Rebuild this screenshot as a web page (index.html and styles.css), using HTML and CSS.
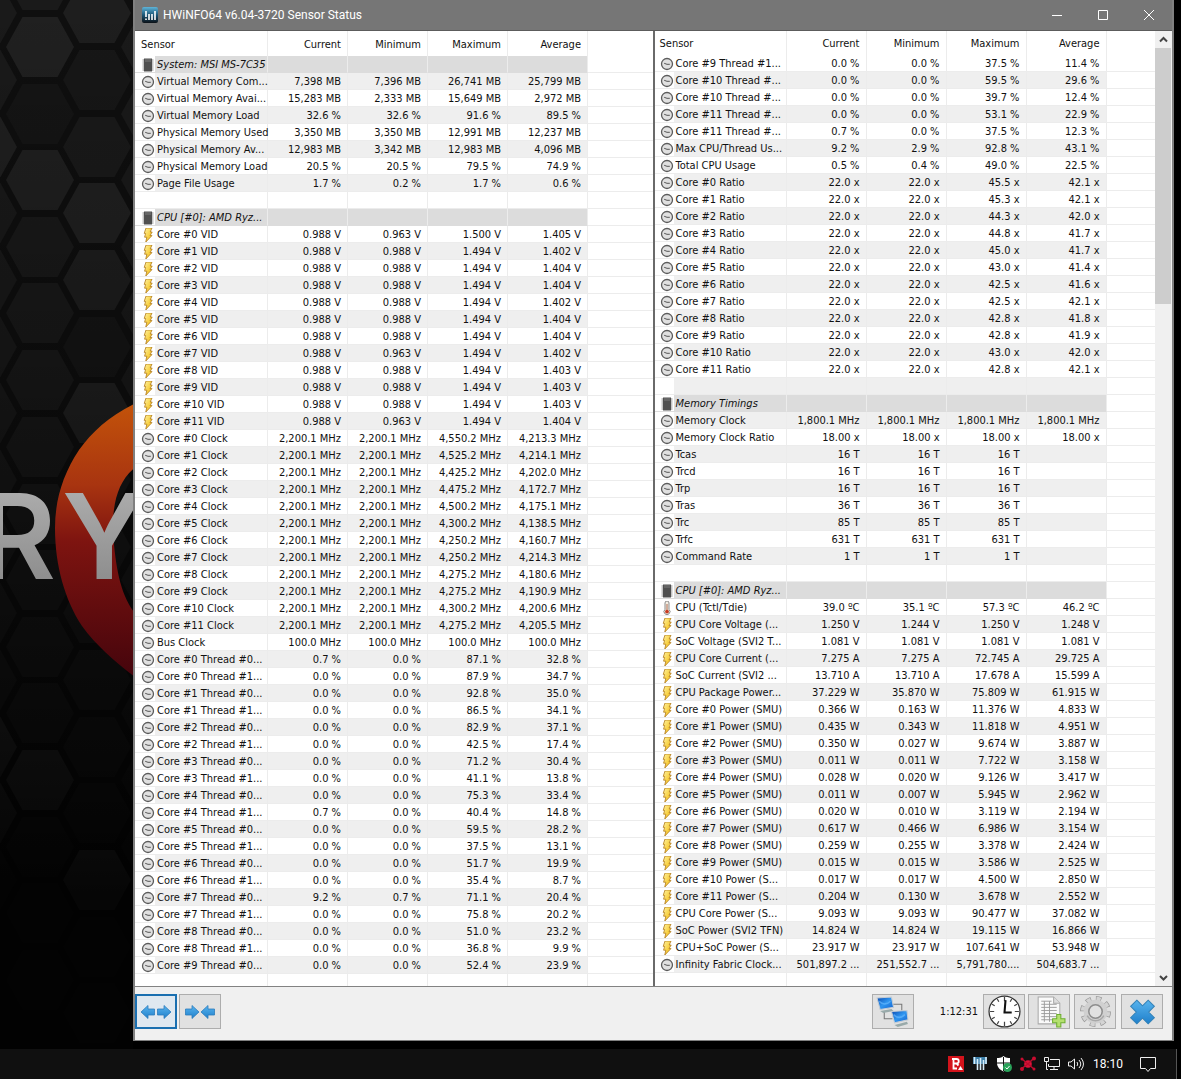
FILE: index.html
```html
<!DOCTYPE html>
<html lang="en">
<head>
<meta charset="utf-8">
<title>HWiNFO64 v6.04-3720 Sensor Status</title>
<link rel="stylesheet" href="styles.css">
</head>
<body>
<svg class="sprites" aria-hidden="true">
  <defs>
    <linearGradient id="bolt-fill" x1="0" y1="0" x2="1" y2="1"><stop offset="0" stop-color="#fff3a0"/><stop offset="1" stop-color="#f2b600"/></linearGradient>
    <linearGradient id="arrow-fill" x1="0" y1="0" x2="0" y2="1"><stop offset="0" stop-color="#58b4ee"/><stop offset="1" stop-color="#1f7fcb"/></linearGradient>
    <linearGradient id="screen-fill" x1="0" y1="0" x2="1" y2="1"><stop offset="0" stop-color="#0a49b0"/><stop offset="0.5" stop-color="#2f96f0"/><stop offset="1" stop-color="#1462cf"/></linearGradient>
    <linearGradient id="app-fill" x1="0" y1="0" x2="0" y2="1"><stop offset="0" stop-color="#5fb4d8"/><stop offset="0.5" stop-color="#1d5676"/><stop offset="1" stop-color="#0a1016"/></linearGradient>
  </defs>
  <symbol id="clock" viewBox="0 0 14 14"><circle cx="7" cy="7" r="5.5" fill="#e0e0e0" stroke="#5c5c5c" stroke-width="1.3"/><path d="M4.2 6.300 7 7.300h2.800" fill="none" stroke="#555"/></symbol>
  <symbol id="bolt" viewBox="0 0 14 14"><path d="M5 0h6L9.200 4h2L9 7.600h2L4.800 14l1-4.800H3.600l1-3.800H3.200z" fill="url(#bolt-fill)" stroke="#b07a1c" stroke-width=".8"/></symbol>
  <symbol id="chip" viewBox="0 0 14 14"><path d="M1.500 2h11M1.500 4h11M1.500 6h11M1.500 8h11M1.500 10h11M1.500 12h11" stroke="#888"/><path d="M3 .5h8v13H3z" fill="#505050"/><path d="M4 1h6v3H4z" fill="#666"/></symbol>
  <symbol id="thermo" viewBox="0 0 14 14"><path d="M5 2a2 2 0 0 1 4 0v6.400a3 3 0 1 1-4 0z" fill="#f4efe4" stroke="#8b8b8b"/><path d="M7 3v6" stroke="#b06a50"/><circle cx="7" cy="10.600" r="1.900" fill="#c83a20"/></symbol>
  <symbol id="app" viewBox="0 0 16 16"><rect width="16" height="16" rx="2" fill="url(#app-fill)"/><path d="M4 4v6M7 7v6M10 7v6M13 4v9M4 11.500V13" stroke="#fff" stroke-width="1.600"/></symbol>
  <symbol id="arrow-left" viewBox="0 0 16 16"><path d="M1 8 8 1.500V5h6.500v6H8v3.500z" fill="url(#arrow-fill)" stroke="#2c7cbc" stroke-width=".8"/></symbol>
  <symbol id="arrow-right" viewBox="0 0 16 16"><path d="M15 8 8 1.500V5H1.500v6H8v3.500z" fill="url(#arrow-fill)" stroke="#2c7cbc" stroke-width=".8"/></symbol>
</svg>

<main class="desktop">
  <svg class="wallpaper" aria-hidden="true">
    <defs>
      <linearGradient id="fade" x1="0" y1="0" x2="0" y2="1"><stop offset="0" stop-color="#000" stop-opacity="0"/><stop offset=".35" stop-color="#000" stop-opacity=".25"/><stop offset=".85" stop-color="#000" stop-opacity=".9"/></linearGradient>
      <linearGradient id="ring" x1="0" y1="0" x2="0" y2="1"><stop offset="0" stop-color="#c4540a"/><stop offset=".3" stop-color="#a83410"/><stop offset=".5" stop-color="#7e1410"/><stop offset="1" stop-color="#43040c"/></linearGradient>
      <linearGradient id="steel" x1="0" y1="0" x2="0" y2="1"><stop offset="0" stop-color="#b4b4b4"/><stop offset="1" stop-color="#858585"/></linearGradient>
      <path id="hex" d="M-17.500-30h35L34 0 17.500 30h-35L-34 0z"/>
    </defs>
    <rect width="100%" height="100%" fill="#0f0f0f"/>
    <g fill="#1a1a1a">
      <use href="#hex" x="40" y="-20"/><use href="#hex" x="40" y="47" fill="#202020"/><use href="#hex" x="40" y="114" fill="#151515"/><use href="#hex" x="40" y="180" fill="#202020"/><use href="#hex" x="40" y="247"/><use href="#hex" x="40" y="313"/><use href="#hex" x="40" y="380"/><use href="#hex" x="40" y="447"/><use href="#hex" x="40" y="514"/><use href="#hex" x="40" y="580"/><use href="#hex" x="40" y="647"/><use href="#hex" x="40" y="713"/><use href="#hex" x="40" y="780" fill="#2c2c2c"/><use href="#hex" x="40" y="847"/><use href="#hex" x="40" y="913"/><use href="#hex" x="40" y="980"/>
      <use href="#hex" x="97" y="13" fill="#1e1e1e"/><use href="#hex" x="97" y="80" fill="#171717"/><use href="#hex" x="97" y="147"/><use href="#hex" x="97" y="213" fill="#212121"/><use href="#hex" x="97" y="280" fill="#1f1f1f"/><use href="#hex" x="97" y="347" fill="#161616"/><use href="#hex" x="97" y="413" fill="#222"/><use href="#hex" x="97" y="480"/><use href="#hex" x="97" y="547"/><use href="#hex" x="97" y="613"/><use href="#hex" x="97" y="680"/><use href="#hex" x="97" y="747"/><use href="#hex" x="97" y="813"/><use href="#hex" x="97" y="880" fill="#3c3c3c"/><use href="#hex" x="97" y="947"/><use href="#hex" x="97" y="1013"/>
      <use href="#hex" x="-17" y="13"/><use href="#hex" x="-17" y="80"/><use href="#hex" x="-17" y="147" fill="#202020"/><use href="#hex" x="-17" y="213"/><use href="#hex" x="-17" y="280"/><use href="#hex" x="-17" y="347"/><use href="#hex" x="-17" y="413"/><use href="#hex" x="-17" y="480"/><use href="#hex" x="-17" y="547"/><use href="#hex" x="-17" y="613"/><use href="#hex" x="-17" y="680"/><use href="#hex" x="-17" y="747" fill="#2a2a2a"/><use href="#hex" x="-17" y="813" fill="#2a2a2a"/><use href="#hex" x="-17" y="880"/>
      <use href="#hex" x="155" y="47"/><use href="#hex" x="155" y="114"/><use href="#hex" x="155" y="180"/><use href="#hex" x="155" y="247"/><use href="#hex" x="155" y="313"/><use href="#hex" x="155" y="380"/><use href="#hex" x="155" y="580"/><use href="#hex" x="155" y="713"/><use href="#hex" x="155" y="780"/><use href="#hex" x="155" y="847"/>
    </g>
    <rect width="100%" height="100%" fill="url(#fade)"/>
    <path d="M140 401C112 414 93 430 79 450 63 474 55 500 55 528c0 38 10 72 27 98 16 22 36 38 58 55v-62c-18-18-24-46-27-86-1-32 6-56 27-69z" fill="url(#ring)"/>
    <g class="wordmark" fill="url(#steel)"><text x="56" y="579" text-anchor="end">R</text><text x="62" y="579">Y</text></g>
  </svg>

  <section class="window">
    <header class="titlebar">
      <svg class="app-icon"><use href="#app"/></svg>
      <h1>HWiNFO64 v6.04-3720 Sensor Status</h1>
      <button aria-label="Minimize"><svg viewBox="0 0 12 12"><path d="M1 6.500h10"/></svg></button>
      <button aria-label="Maximize"><svg viewBox="0 0 12 12"><path d="M1.500 1.500h9v9h-9z"/></svg></button>
      <button aria-label="Close"><svg viewBox="0 0 12 12"><path d="m1 1 10 10M11 1 1 11"/></svg></button>
    </header>

    <div class="panels">
      <div class="panel">
        <table class="sensors" id="left"></table>
      </div>
      <div class="panel panel-right">
        <table class="sensors" id="right"></table>
        <div class="scrollbar">
          <button aria-label="Scroll up"><svg viewBox="0 0 9 9"><path d="m1 6.500 3.500-3.500L8 6.500"/></svg></button>
          <div class="thumb"></div>
          <div class="track"></div>
          <button aria-label="Scroll down"><svg viewBox="0 0 9 9"><path d="M1 3l3.500 3.500L8 3"/></svg></button>
        </div>
      </div>
    </div>

    <footer class="toolbar">
      <button class="tool focused" aria-label="Expand columns"><svg class="arrow"><use href="#arrow-left"/></svg><svg class="arrow"><use href="#arrow-right"/></svg></button>
      <button class="tool" aria-label="Shrink columns"><svg class="arrow"><use href="#arrow-right"/></svg><svg class="arrow"><use href="#arrow-left"/></svg></button>
      <button class="tool network" aria-label="Remote monitoring">
        <svg class="glyph" viewBox="0 0 32 32"><path d="M16 9h9v6M8 16v7h8" fill="none" stroke="#777"/><path d="m1 3 14-1 2 10-13 2z" fill="url(#screen-fill)" stroke="#c4ccd4"/><path d="m4 15.500 11-2 2 2-10 2z" fill="#9aa"/><path d="m15 16 15-1 1 9-13 3z" fill="url(#screen-fill)" stroke="#c4ccd4"/><path d="m18 29 12-3 1 2-10 3z" fill="#9aa"/><path d="M3 6c4 4 8 3 11 0M17 19c4 4 8 3 11 0" fill="none" stroke="#6cbcff" stroke-opacity=".6" stroke-width="1.500"/></svg>
      </button>
      <time class="elapsed">1:12:31</time>
      <button class="tool" aria-label="Reset clock">
        <svg class="glyph" viewBox="0 0 32 32"><circle cx="16" cy="16" r="15" fill="#fff" stroke="#333" stroke-width="1.200"/><path d="M16 2v4M16 26v4M2 16h4M26 16h4M9 3.900l1.500 2.600M23 3.900l-1.500 2.600M3.900 9l2.600 1.500M28.100 9l-2.600 1.500M3.900 23l2.600-1.500M28.100 23l-2.600-1.500M9 28.100l1.500-2.600M23 28.100l-1.500-2.600" stroke="#444" stroke-width="1.200"/><path d="M17 5 16 17M15 17h8" fill="none" stroke="#111" stroke-width="2"/></svg>
      </button>
      <button class="tool log" aria-label="Start logging">
        <svg class="glyph" viewBox="0 0 32 32"><path d="M5 2h15l6 6v20H5z" fill="#fafafa" stroke="#aaa"/><path d="M20 2v6h6" fill="#ddd" stroke="#aaa"/><path d="M8 9h15M8 12h15M8 15h15M8 18h15M8 21h15M8 24h15M8 6h10M11 6v20M16 6v20" stroke="#999" stroke-width=".9"/><path d="M23 19h4v4h4v4h-4v4h-4v-4h-4v-4h4z" fill="#b4e070" stroke="#6eae30"/></svg>
      </button>
      <button class="tool settings" aria-label="Settings">
        <svg class="glyph" viewBox="0 0 32 32"><circle cx="16" cy="16" r="12.500" fill="none" stroke="#999" stroke-width="5" stroke-dasharray="5.200 4.617"/><circle cx="16" cy="16" r="12.500" fill="none" stroke="#d4d4d4" stroke-width="3.500" stroke-dasharray="4 5.817" stroke-dashoffset="-.6"/><circle cx="16" cy="16" r="9" fill="none" stroke="#d0d0d0" stroke-width="5"/><circle cx="16" cy="16" r="6.500" fill="none" stroke="#8d8d8d" stroke-width="1.500"/><path d="M8 20a9 9 0 0 0 16 0" fill="none" stroke="#a8a8a8" stroke-width="1.500"/></svg>
      </button>
      <button class="tool exit" aria-label="Close sensors">
        <svg class="glyph" viewBox="0 0 32 32"><path d="m10.500 5 5.500 5.500L21.500 5l6 6-5.500 5.500 5.500 5.500-6 6-5.500-5.500-5.500 5.500-6-6 5.500-5.500L4.500 11z" fill="url(#arrow-fill)" stroke="#3583b8"/></svg>
      </button>
    </footer>
  </section>
</main>

<footer class="taskbar">
  <button aria-label="Bitdefender"><svg viewBox="0 0 16 16"><path d="M0 0h16v16H0z" fill="#d3131b"/><path d="M4 3h4.500a2 2 0 0 1 0 4.500H5.500M5.500 3v9.500H9M8.500 7.500l2 2" fill="none" stroke="#fff" stroke-width="1.800"/><path d="m12.500 10 2.500 4h-5z" fill="#fff"/></svg></button>
  <button aria-label="HWiNFO"><svg viewBox="0 0 16 16"><path d="M1 1h14v7H1z" fill="#3d7fa8"/><path d="M2.500 1v7M5.500 3v11M8.500 2v12M11.500 4v10M14 1v7" stroke="#d8eefa" stroke-width="1.600"/></svg></button>
  <button aria-label="Security"><svg viewBox="0 0 16 16"><path d="M7.500 0C5 2 3 2 1 2v5c0 4 3 7 6.500 8.500C11 14 14 11 14 7V2c-2 0-4 0-6.500-2z" fill="#fff"/><path d="M7.500 1v14M1 7h13" stroke="#111"/><circle cx="11.500" cy="11.500" r="4.500" fill="#2aa35a"/><path d="m9.500 11.500 1.500 1.500 2.500-3" fill="none" stroke="#fff"/></svg></button>
  <button aria-label="Radeon"><svg viewBox="0 0 16 16"><circle cx="8" cy="8" r="3.800" fill="#e01038"/><path d="m8 8-6-5M8 8l6-6M8 8l-7 5M8 8l6 5" stroke="#b80c2c" stroke-width="1.500"/><circle cx="2" cy="3" r="1.500" fill="#c80c30"/><circle cx="14" cy="2.500" r="2" fill="#c80c30"/><circle cx="2" cy="13" r="2" fill="#c80c30"/><circle cx="14" cy="13" r="1.500" fill="#c80c30"/></svg></button>
  <button aria-label="Network"><svg viewBox="0 0 16 16"><path d="M6 3.500h9.500v7H4.500V8M10 10.500v3M6 13.500h8M.5 1.500h4v4h-4zM2.500 5.500v8H4" fill="none" stroke="#eee"/></svg></button>
  <button aria-label="Volume"><svg viewBox="0 0 16 16"><path d="M.5 6v4H3l3.500 3V3L3 6zM9 6q1.500 2 0 4M11 4q3.500 4 0 8M13 2q5 6 0 12" fill="none" stroke="#eee"/></svg></button>
  <time>18:10</time>
  <button class="notifications" aria-label="Notifications"><svg viewBox="0 0 16 16"><path d="M.5 1.500h15v11h-5L8 15.500l-2.500-3h-5z" fill="none" stroke="#eee"/></svg></button>
</footer>
<script src="script.js"></script>
</body>
</html>
```
FILE: styles.css
```css
* { box-sizing: border-box; }

body {
  margin: 0;
  min-height: 100vh;
  display: flex;
  flex-direction: column;
  background: #000;
  color: #111;
  font: 11px/14px "DejaVu Sans Condensed", "Noto Sans", sans-serif;
}

button {
  padding: 0;
  border: 0;
  background: none;
  font: inherit;
  display: flex;
  align-items: center;
  justify-content: center;
}

.sprites { position: absolute; width: 0; height: 0; }

/* Desktop */
.desktop {
  position: relative;
  flex: 1;
  display: flex;
  padding: 0 7px 8px 133px;
}
.wallpaper { position: absolute; left: 0; top: 0; width: 133px; height: 100%; }
.wordmark { font: 600 118px Inter, sans-serif; }

/* Window */
.window {
  position: relative;
  flex: 1;
  min-width: 0;
  display: flex;
  flex-direction: column;
  border: solid #808080;
  border-width: 0 2px 1px;
  background: #f0f0f0;
}
.titlebar {
  display: flex;
  align-items: center;
  height: 31px;
  padding-left: 7px;
  background: #767676;
  border-bottom: 1px solid #5c5c5c;
  color: #fff;
}
.app-icon { width: 16px; height: 16px; margin-right: 5px; }
.titlebar h1 { flex: 1; margin: 0; font: 12px/16px Roboto, sans-serif; }
.titlebar button { width: 46px; height: 30px; }
.titlebar button svg { width: 12px; height: 12px; fill: none; stroke: #fff; }

.panels {
  flex: 1;
  display: grid;
  grid-template-columns: 1fr 1fr;
  gap: 2px;
  background: #6a6a6a;
  border-bottom: 1px solid #828282;
}
.panel { display: flex; align-items: stretch; min-width: 0; background: #fff; }

/* Sensor tables */
.sensors {
  --inset: 20px;
  flex: 1;
  table-layout: fixed;
  width: 100%;
  height: 100%;
  border-collapse: separate;
  border-spacing: 0;
  white-space: nowrap;
}
.sensors th, .sensors td {
  padding: 2px 6px 0 0;
  border-right: 1px solid #ececec;
  text-align: right;
  font-weight: 400;
}
.sensors th { width: 80px; height: 25px; }
.sensors td { height: 17px; border-bottom: 1px solid #ececec; }
.sensors .name { width: 133px; padding-left: 6px; padding-right: 0; text-align: left; }
.sensors .rest { width: auto; border-right: 0; }
.sensors tbody tr:nth-child(even) td { background: #efefef; }
.sensors tbody tr.group td { background: #dcdcdc; border-bottom-color: #dcdcdc; }
.sensors tbody tr:nth-child(even) .name { background: linear-gradient(to right, #fff var(--inset), #efefef var(--inset)); }
.sensors tbody tr.group .name { background: linear-gradient(to right, #fff var(--inset), #dcdcdc var(--inset)); }
.sensors tbody tr .rest.rest { background: #fff; border-bottom-color: #ececec; }
.sensors .group .label { font-style: italic; }
.sensors .tail td { height: auto; padding: 0; border-bottom: 0; }
.cell { display: flex; align-items: center; gap: 2px; height: 14px; }
.cell svg { flex: none; width: 14px; height: 14px; }

.panel-right .sensors { --inset: 19px; }
.panel-right .sensors th { height: 24px; }
.panel-right .sensors .name { width: 132px; padding-left: 5px; }

.scrollbar { display: flex; flex-direction: column; width: 17px; padding-right: 1px; background: #f0f0f0; }
.scrollbar button { height: 17px; }
.scrollbar svg { width: 9px; height: 9px; fill: none; stroke: #444; stroke-width: 2; }
.thumb { flex: 5; background: #cdcdcd; }
.track { flex: 13; }

/* Toolbar */
.toolbar { display: flex; align-items: center; gap: 2px; height: 53px; padding: 0 9px 4px 0; }
.tool { width: 42px; height: 35px; background: #e1e1e1; border: 1px solid #adadad; }
.focused { border: 2px solid #1a6fb0; background: #dfe8f0; }
.arrow { width: 16px; height: 16px; }
.glyph { width: 33px; height: 33px; }
.network { margin-left: auto; }
.elapsed { margin: 0 3px 0 24px; }
.log { margin-left: 1px; }
.settings { margin-left: 2px; }
.exit { margin-left: 3px; }

/* Taskbar */
.taskbar {
  display: flex;
  align-items: center;
  justify-content: flex-end;
  gap: 8px;
  height: 30px;
  margin-right: 4px;
  padding-right: 20px;
  background: #101010;
  border-right: 1px solid #555;
  color: #fff;
  font: 12px/16px Roboto, sans-serif;
}
.taskbar svg { width: 16px; height: 16px; }
.taskbar time { margin-left: 1px; }
.taskbar .notifications { margin-left: 9px; }
```
FILE: script.js
```js
// One line per table row: icon | label | current | minimum | maximum | average
const left = `chip|System: MSI MS-7C35
clock|Virtual Memory Com...|7,398 MB|7,396 MB|26,741 MB|25,799 MB
clock|Virtual Memory Avai...|15,283 MB|2,333 MB|15,649 MB|2,972 MB
clock|Virtual Memory Load|32.6 %|32.6 %|91.6 %|89.5 %
clock|Physical Memory Used|3,350 MB|3,350 MB|12,991 MB|12,237 MB
clock|Physical Memory Av...|12,983 MB|3,342 MB|12,983 MB|4,096 MB
clock|Physical Memory Load|20.5 %|20.5 %|79.5 %|74.9 %
clock|Page File Usage|1.7 %|0.2 %|1.7 %|0.6 %

chip|CPU [#0]: AMD Ryz...
bolt|Core #0 VID|0.988 V|0.963 V|1.500 V|1.405 V
bolt|Core #1 VID|0.988 V|0.988 V|1.494 V|1.402 V
bolt|Core #2 VID|0.988 V|0.988 V|1.494 V|1.404 V
bolt|Core #3 VID|0.988 V|0.988 V|1.494 V|1.404 V
bolt|Core #4 VID|0.988 V|0.988 V|1.494 V|1.402 V
bolt|Core #5 VID|0.988 V|0.988 V|1.494 V|1.404 V
bolt|Core #6 VID|0.988 V|0.988 V|1.494 V|1.404 V
bolt|Core #7 VID|0.988 V|0.963 V|1.494 V|1.402 V
bolt|Core #8 VID|0.988 V|0.988 V|1.494 V|1.403 V
bolt|Core #9 VID|0.988 V|0.988 V|1.494 V|1.403 V
bolt|Core #10 VID|0.988 V|0.988 V|1.494 V|1.403 V
bolt|Core #11 VID|0.988 V|0.963 V|1.494 V|1.404 V
clock|Core #0 Clock|2,200.1 MHz|2,200.1 MHz|4,550.2 MHz|4,213.3 MHz
clock|Core #1 Clock|2,200.1 MHz|2,200.1 MHz|4,525.2 MHz|4,214.1 MHz
clock|Core #2 Clock|2,200.1 MHz|2,200.1 MHz|4,425.2 MHz|4,202.0 MHz
clock|Core #3 Clock|2,200.1 MHz|2,200.1 MHz|4,475.2 MHz|4,172.7 MHz
clock|Core #4 Clock|2,200.1 MHz|2,200.1 MHz|4,500.2 MHz|4,175.1 MHz
clock|Core #5 Clock|2,200.1 MHz|2,200.1 MHz|4,300.2 MHz|4,138.5 MHz
clock|Core #6 Clock|2,200.1 MHz|2,200.1 MHz|4,250.2 MHz|4,160.7 MHz
clock|Core #7 Clock|2,200.1 MHz|2,200.1 MHz|4,250.2 MHz|4,214.3 MHz
clock|Core #8 Clock|2,200.1 MHz|2,200.1 MHz|4,275.2 MHz|4,180.6 MHz
clock|Core #9 Clock|2,200.1 MHz|2,200.1 MHz|4,275.2 MHz|4,190.9 MHz
clock|Core #10 Clock|2,200.1 MHz|2,200.1 MHz|4,300.2 MHz|4,200.6 MHz
clock|Core #11 Clock|2,200.1 MHz|2,200.1 MHz|4,275.2 MHz|4,205.5 MHz
clock|Bus Clock|100.0 MHz|100.0 MHz|100.0 MHz|100.0 MHz
clock|Core #0 Thread #0...|0.7 %|0.0 %|87.1 %|32.8 %
clock|Core #0 Thread #1...|0.0 %|0.0 %|87.9 %|34.7 %
clock|Core #1 Thread #0...|0.0 %|0.0 %|92.8 %|35.0 %
clock|Core #1 Thread #1...|0.0 %|0.0 %|86.5 %|34.1 %
clock|Core #2 Thread #0...|0.0 %|0.0 %|82.9 %|37.1 %
clock|Core #2 Thread #1...|0.0 %|0.0 %|42.5 %|17.4 %
clock|Core #3 Thread #0...|0.0 %|0.0 %|71.2 %|30.4 %
clock|Core #3 Thread #1...|0.0 %|0.0 %|41.1 %|13.8 %
clock|Core #4 Thread #0...|0.0 %|0.0 %|75.3 %|33.4 %
clock|Core #4 Thread #1...|0.7 %|0.0 %|40.4 %|14.8 %
clock|Core #5 Thread #0...|0.0 %|0.0 %|59.5 %|28.2 %
clock|Core #5 Thread #1...|0.0 %|0.0 %|37.5 %|13.1 %
clock|Core #6 Thread #0...|0.0 %|0.0 %|51.7 %|19.9 %
clock|Core #6 Thread #1...|0.0 %|0.0 %|35.4 %|8.7 %
clock|Core #7 Thread #0...|9.2 %|0.7 %|71.1 %|20.4 %
clock|Core #7 Thread #1...|0.0 %|0.0 %|75.8 %|20.2 %
clock|Core #8 Thread #0...|0.0 %|0.0 %|51.0 %|23.2 %
clock|Core #8 Thread #1...|0.0 %|0.0 %|36.8 %|9.9 %
clock|Core #9 Thread #0...|0.0 %|0.0 %|52.4 %|23.9 %`;

const right = `clock|Core #9 Thread #1...|0.0 %|0.0 %|37.5 %|11.4 %
clock|Core #10 Thread #...|0.0 %|0.0 %|59.5 %|29.6 %
clock|Core #10 Thread #...|0.0 %|0.0 %|39.7 %|12.4 %
clock|Core #11 Thread #...|0.0 %|0.0 %|53.1 %|22.9 %
clock|Core #11 Thread #...|0.7 %|0.0 %|37.5 %|12.3 %
clock|Max CPU/Thread Us...|9.2 %|2.9 %|92.8 %|43.1 %
clock|Total CPU Usage|0.5 %|0.4 %|49.0 %|22.5 %
clock|Core #0 Ratio|22.0 x|22.0 x|45.5 x|42.1 x
clock|Core #1 Ratio|22.0 x|22.0 x|45.3 x|42.1 x
clock|Core #2 Ratio|22.0 x|22.0 x|44.3 x|42.0 x
clock|Core #3 Ratio|22.0 x|22.0 x|44.8 x|41.7 x
clock|Core #4 Ratio|22.0 x|22.0 x|45.0 x|41.7 x
clock|Core #5 Ratio|22.0 x|22.0 x|43.0 x|41.4 x
clock|Core #6 Ratio|22.0 x|22.0 x|42.5 x|41.6 x
clock|Core #7 Ratio|22.0 x|22.0 x|42.5 x|42.1 x
clock|Core #8 Ratio|22.0 x|22.0 x|42.8 x|41.8 x
clock|Core #9 Ratio|22.0 x|22.0 x|42.8 x|41.9 x
clock|Core #10 Ratio|22.0 x|22.0 x|43.0 x|42.0 x
clock|Core #11 Ratio|22.0 x|22.0 x|42.8 x|42.1 x

chip|Memory Timings
clock|Memory Clock|1,800.1 MHz|1,800.1 MHz|1,800.1 MHz|1,800.1 MHz
clock|Memory Clock Ratio|18.00 x|18.00 x|18.00 x|18.00 x
clock|Tcas|16 T|16 T|16 T|
clock|Trcd|16 T|16 T|16 T|
clock|Trp|16 T|16 T|16 T|
clock|Tras|36 T|36 T|36 T|
clock|Trc|85 T|85 T|85 T|
clock|Trfc|631 T|631 T|631 T|
clock|Command Rate|1 T|1 T|1 T|

chip|CPU [#0]: AMD Ryz...
thermo|CPU (Tctl/Tdie)|39.0 ºC|35.1 ºC|57.3 ºC|46.2 ºC
bolt|CPU Core Voltage (...|1.250 V|1.244 V|1.250 V|1.248 V
bolt|SoC Voltage (SVI2 T...|1.081 V|1.081 V|1.081 V|1.081 V
bolt|CPU Core Current (...|7.275 A|7.275 A|72.745 A|29.725 A
bolt|SoC Current (SVI2 ...|13.710 A|13.710 A|17.678 A|15.599 A
bolt|CPU Package Power...|37.229 W|35.870 W|75.809 W|61.915 W
bolt|Core #0 Power (SMU)|0.366 W|0.163 W|11.376 W|4.833 W
bolt|Core #1 Power (SMU)|0.435 W|0.343 W|11.818 W|4.951 W
bolt|Core #2 Power (SMU)|0.350 W|0.027 W|9.674 W|3.887 W
bolt|Core #3 Power (SMU)|0.011 W|0.011 W|7.722 W|3.158 W
bolt|Core #4 Power (SMU)|0.028 W|0.020 W|9.126 W|3.417 W
bolt|Core #5 Power (SMU)|0.011 W|0.007 W|5.945 W|2.962 W
bolt|Core #6 Power (SMU)|0.020 W|0.010 W|3.119 W|2.194 W
bolt|Core #7 Power (SMU)|0.617 W|0.466 W|6.986 W|3.154 W
bolt|Core #8 Power (SMU)|0.259 W|0.255 W|3.378 W|2.424 W
bolt|Core #9 Power (SMU)|0.015 W|0.015 W|3.586 W|2.525 W
bolt|Core #10 Power (S...|0.017 W|0.017 W|4.500 W|2.850 W
bolt|Core #11 Power (S...|0.204 W|0.130 W|3.678 W|2.552 W
bolt|CPU Core Power (S...|9.093 W|9.093 W|90.477 W|37.082 W
bolt|SoC Power (SVI2 TFN)|14.824 W|14.824 W|19.115 W|16.866 W
bolt|CPU+SoC Power (S...|23.917 W|23.917 W|107.641 W|53.948 W
clock|Infinity Fabric Clock...|501,897.2 ...|251,552.7 ...|5,791,780....|504,683.7 ...`;

const head = `<thead><tr><th class="name">Sensor</th><th>Current</th><th>Minimum</th>
  <th>Maximum</th><th>Average</th><th class="rest"></th></tr></thead>`;

function row(line) {
  const [icon, label, ...values] = line.split("|");
  const name = icon
    ? `<div class="cell"><svg aria-hidden="true"><use href="#${icon}"/></svg><span class="label">${label}</span></div>`
    : "";
  const cells = [0, 1, 2, 3].map(i => `<td>${values[i] || ""}</td>`).join("");
  return `<tr class="${icon === "chip" ? "group" : "reading"}"><td class="name">${name}</td>${cells}<td class="rest"></td></tr>`;
}

function fill(id, text) {
  const tail = `<tr class="tail"><td class="name"></td><td></td><td></td><td></td><td></td><td class="rest"></td></tr>`;
  document.getElementById(id).innerHTML =
    `${head}<tbody>${text.split("\n").map(row).join("")}${tail}</tbody>`;
}

fill("left", left);
fill("right", right);
```
